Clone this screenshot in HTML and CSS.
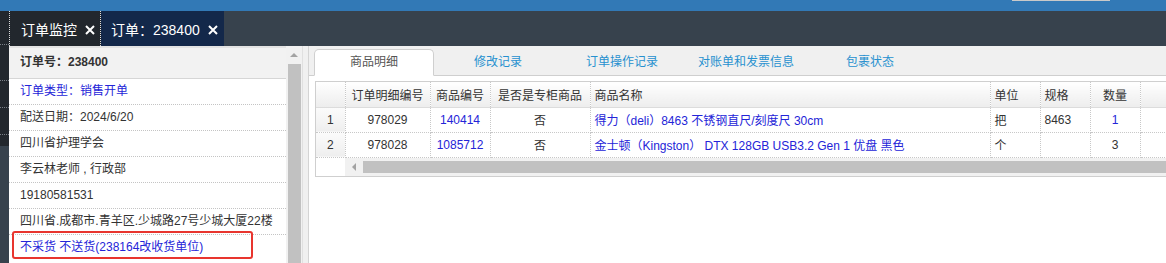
FILE: index.html
```html
<!DOCTYPE html>
<html>
<head>
	<meta charset="UTF-8">
	<title>订单：238400</title>
	<link rel="stylesheet" href="styles.css">
</head>
<body>
	<div class="topbar"><div class="search-edge"></div></div>
	<div class="frame">
		<div class="sidenav">
			<div class="nav-dark">
				<div class="nav-item n1"></div>
				<div class="nav-item n2"></div>
				<div class="nav-item n3"></div>
				<div class="nav-item n3"></div>
			</div>
		</div>
		<div class="workspace">
			<div class="tabbar">
				<div class="tab tab-home">订单监控<svg class="close" width="10" height="10" viewBox="0 0 10 10"><path d="M1 1L9 9M9 1L1 9" stroke="#fff" stroke-width="2"/></svg></div>
				<div class="tab tab-current">订单：238400<svg class="close" width="10" height="10" viewBox="0 0 10 10"><path d="M1 1L9 9M9 1L1 9" stroke="#fff" stroke-width="2"/></svg></div>
			</div>
			<div class="content">
				<div class="order-panel">
					<div class="order-list">
						<div class="order-head">订单号：238400</div>
						<div class="order-row link">订单类型：销售开单</div>
						<div class="order-row">配送日期：2024/6/20</div>
						<div class="order-row">四川省护理学会</div>
						<div class="order-row">李云林老师 , 行政部</div>
						<div class="order-row">19180581531</div>
						<div class="order-row">四川省.成都市.青羊区.少城路27号少城大厦22楼</div>
						<div class="order-row link last">不采货 不送货(238164改收货单位)<div class="mark"></div></div>
					</div>
					<div class="vscroll">
						<div class="vs-arrow"></div>
						<div class="vs-thumb"></div>
					</div>
				</div>
				<div class="splitter"></div>
				<div class="detail-panel">
					<div class="detail-tabs">
						<div class="dtab active">商品明细</div>
						<div class="dtab">修改记录</div>
						<div class="dtab">订单操作记录</div>
						<div class="dtab">对账单和发票信息</div>
						<div class="dtab">包裹状态</div>
					</div>
					<div class="detail-body">
						<div class="grid">
							<table>
								<colgroup>
									<col style="width:29px"><col style="width:85px"><col style="width:60px"><col style="width:100px"><col style="width:400px"><col style="width:50px"><col style="width:50px"><col style="width:50px"><col style="width:60px">
								</colgroup>
								<tr>
									<th class="num"></th>
									<th>订单明细编号</th>
									<th>商品编号</th>
									<th>是否是专柜商品</th>
									<th class="left">商品名称</th>
									<th class="left">单位</th>
									<th class="left">规格</th>
									<th>数量</th>
									<th></th>
								</tr>
								<tr>
									<td class="num">1</td>
									<td>978029</td>
									<td class="link">140414</td>
									<td>否</td>
									<td class="left link">得力（deli）8463 不锈钢直尺/刻度尺 30cm</td>
									<td class="left">把</td>
									<td class="left">8463</td>
									<td class="link">1</td>
									<td></td>
								</tr>
								<tr>
									<td class="num">2</td>
									<td>978028</td>
									<td class="link">1085712</td>
									<td>否</td>
									<td class="left link">金士顿（Kingston） DTX 128GB USB3.2 Gen 1 优盘 黑色</td>
									<td class="left">个</td>
									<td class="left"></td>
									<td>3</td>
									<td></td>
								</tr>
							</table>
							<div class="hscroll">
								<div class="hs-gap"></div>
								<div class="hs-track">
									<div class="hs-arrow"></div>
									<div class="hs-thumb"></div>
								</div>
							</div>
						</div>
					</div>
				</div>
			</div>
		</div>
	</div>
</body>
</html>
```

FILE: styles.css
```css
*{
	margin: 0;
	padding: 0;
	box-sizing: border-box;
}
body{
	width: 1166px;
	height: 263px;
	overflow: hidden;
	font-family: "Liberation Sans", "Noto Sans CJK SC", sans-serif;
	font-size: 12px;
	color: #333;
	background: #fff;
}
.topbar{
	height: 11px;
	background: #3279b6;
	display: flex;
	justify-content: flex-end;
}
.search-edge{
	width: 98px;
	height: 1px;
	margin-right: 56px;
	background: #c9c9c9;
}
.frame{
	display: flex;
	height: 252px;
}
.sidenav{
	width: 9px;
	background: #37424d;
}
.nav-dark{
	height: 135px;
	background: #22272d;
}
.nav-item{
	border-bottom: 1px dotted #7a8088;
}
.n1{ height: 34px; }
.n2{ height: 36px; }
.n3{ height: 27px; }

.workspace{
	flex: 1;
	display: flex;
	flex-direction: column;
	min-width: 0;
}
.tabbar{
	height: 35px;
	background: #37424d;
	display: flex;
}
.tab{
	display: flex;
	align-items: center;
	padding-top: 3px;
	color: #fff;
	font-size: 14px;
	line-height: 16px;
}
.tab-home{
	width: 92px;
	padding-left: 11px;
	background: #22272d;
	border-left: 1px dotted #ddd;
	border-right: 1px dotted #ddd;
}
.tab-current{
	width: 123px;
	padding-left: 10px;
	background: #13284a;
}
.close{
	margin-left: 8px;
}

.content{
	flex: 1;
	display: flex;
	min-height: 0;
}
.order-panel{
	width: 293px;
	display: flex;
}
.order-list{
	width: 277px;
	border-top: 2px solid #e3e3e3;
	background: #fff;
}
.order-head{
	height: 31px;
	line-height: 29px;
	padding-left: 11px;
	background: #f2f2f2;
	border-bottom: 1px solid #d6d6d6;
	font-weight: bold;
}
.order-row{
	height: 26px;
	line-height: 25px;
	padding-left: 11px;
	border-bottom: 1px dotted #c4c4c4;
	white-space: nowrap;
}
.order-row.link{
	color: #2424d8;
}
.order-row.last{
	position: relative;
	border-bottom: none;
}
.mark{
	position: absolute;
	left: 3px;
	top: -4px;
	width: 241px;
	height: 28px;
	border: 2px solid #e8352e;
	border-radius: 3px;
}
.vscroll{
	width: 16px;
	background: #f1f1f1;
	display: flex;
	flex-direction: column;
	align-items: center;
}
.vs-arrow{
	height: 18px;
	width: 16px;
	display: flex;
	justify-content: center;
	align-items: center;
}
.vs-arrow::after{
	content: "";
	border-left: 4px solid transparent;
	border-right: 4px solid transparent;
	border-bottom: 4px solid #a3a3a3;
}
.vs-thumb{
	flex: 1;
	width: 13px;
	margin-left: 1px;
	background: #c1c1c1;
}
.splitter{
	width: 7px;
	background: #f0f0f0;
	border-left: 1px solid #e0e0e0;
	border-right: 1px solid #d4d4d4;
}

.detail-panel{
	flex: 1;
	min-width: 0;
	overflow: hidden;
	background: #fff;
}
.detail-tabs{
	height: 30px;
	padding: 3px 0 0 5px;
	background: #f0f0f0;
	border-bottom: 1px solid #cfcfcf;
	display: flex;
	gap: 4px;
}
.dtab{
	width: 120px;
	height: 27px;
	line-height: 25px;
	text-align: center;
	color: #2790cf;
	border: 1px solid transparent;
}
.dtab.active{
	background: #fff;
	color: #555;
	border-color: #cfcfcf;
	border-bottom-color: #fff;
	border-radius: 5px 5px 0 0;
}
.detail-body{
	padding: 5px 0 0 6px;
}
.grid{
	width: 886px;
	border: 1px solid #cfcfcf;
}
table{
	width: 884px;
	table-layout: fixed;
	border-collapse: collapse;
}
th, td{
	height: 25px;
	border: 1px dotted #c8c8c8;
	text-align: center;
	font-weight: normal;
	white-space: nowrap;
	overflow: hidden;
}
tr:first-child th{
	border-top: none;
}
th:first-child, td:first-child{
	border-left: none;
}
th{
	background: linear-gradient(#ffffff, #ededed);
	border-bottom: 1px solid #dcdcdc;
}
td.num{
	background: linear-gradient(#fbfbfb, #eeeeee);
}
.left{
	text-align: left;
	padding-left: 4px;
}
td.link{
	color: #2424d8;
}
.hscroll{
	height: 18px;
	display: flex;
}
.hs-gap{
	width: 29px;
}
.hs-track{
	flex: 1;
	display: flex;
	background: #f1f1f1;
}
.hs-arrow{
	width: 18px;
	display: flex;
	justify-content: center;
	align-items: center;
}
.hs-arrow::after{
	content: "";
	border-top: 4px solid transparent;
	border-bottom: 4px solid transparent;
	border-right: 4px solid #a3a3a3;
}
.hs-thumb{
	flex: 1;
	margin: 3px 0;
	background: #c1c1c1;
}
```
